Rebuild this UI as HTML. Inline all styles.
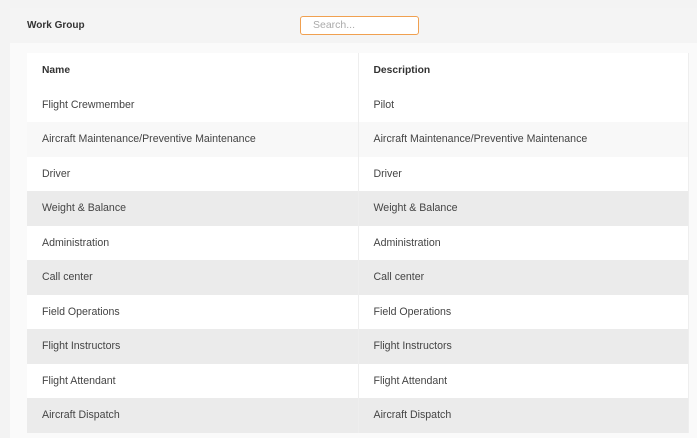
<!DOCTYPE html><html><head><style>
body{margin:0;width:697px;height:431px;overflow:hidden;background:#f3f3f3;font-family:"Liberation Sans",sans-serif;position:relative}
.card{position:absolute;left:10px;top:8px;width:690px;height:430px;background:#fafafa}
.hdr{position:absolute;left:10px;top:8px;width:687px;height:35px;background:#f4f4f4}
.title{position:absolute;left:27px;top:20px;font-size:10px;font-weight:bold;color:#333}
.search{position:absolute;left:300px;top:16px;width:105px;height:17px;border:1.5px solid #f0a050;border-radius:3px;background:#fff;font-size:10.5px;color:#aaa;line-height:17px;padding-left:12px}
table{position:absolute;left:27px;top:53px;width:662px;border-collapse:collapse;font-size:10.6px;color:#444;border-right:1px solid #eee}
td,th{height:34.5px;padding:0 0 0 15px;text-align:left;box-sizing:border-box}
th{font-weight:bold;color:#333;font-size:10.3px}
td:first-child,th:first-child{width:331px;border-right:1px solid #eee}
tr{background:#fff}
tr.l{background:#f8f8f8}
tr.g{background:#ebebeb}
</style></head><body>
<div class="card"></div><div class="hdr"></div>
<div class="title">Work Group</div>
<div class="search">Search...</div>
<table>
<tr><th>Name</th><th>Description</th></tr>
<tr><td>Flight Crewmember</td><td>Pilot</td></tr>
<tr class="l"><td>Aircraft Maintenance/Preventive Maintenance</td><td>Aircraft Maintenance/Preventive Maintenance</td></tr>
<tr><td>Driver</td><td>Driver</td></tr>
<tr class="g"><td>Weight &amp; Balance</td><td>Weight &amp; Balance</td></tr>
<tr><td>Administration</td><td>Administration</td></tr>
<tr class="g"><td>Call center</td><td>Call center</td></tr>
<tr><td>Field Operations</td><td>Field Operations</td></tr>
<tr class="g"><td>Flight Instructors</td><td>Flight Instructors</td></tr>
<tr><td>Flight Attendant</td><td>Flight Attendant</td></tr>
<tr class="g"><td>Aircraft Dispatch</td><td>Aircraft Dispatch</td></tr>
</table>
</body></html>
